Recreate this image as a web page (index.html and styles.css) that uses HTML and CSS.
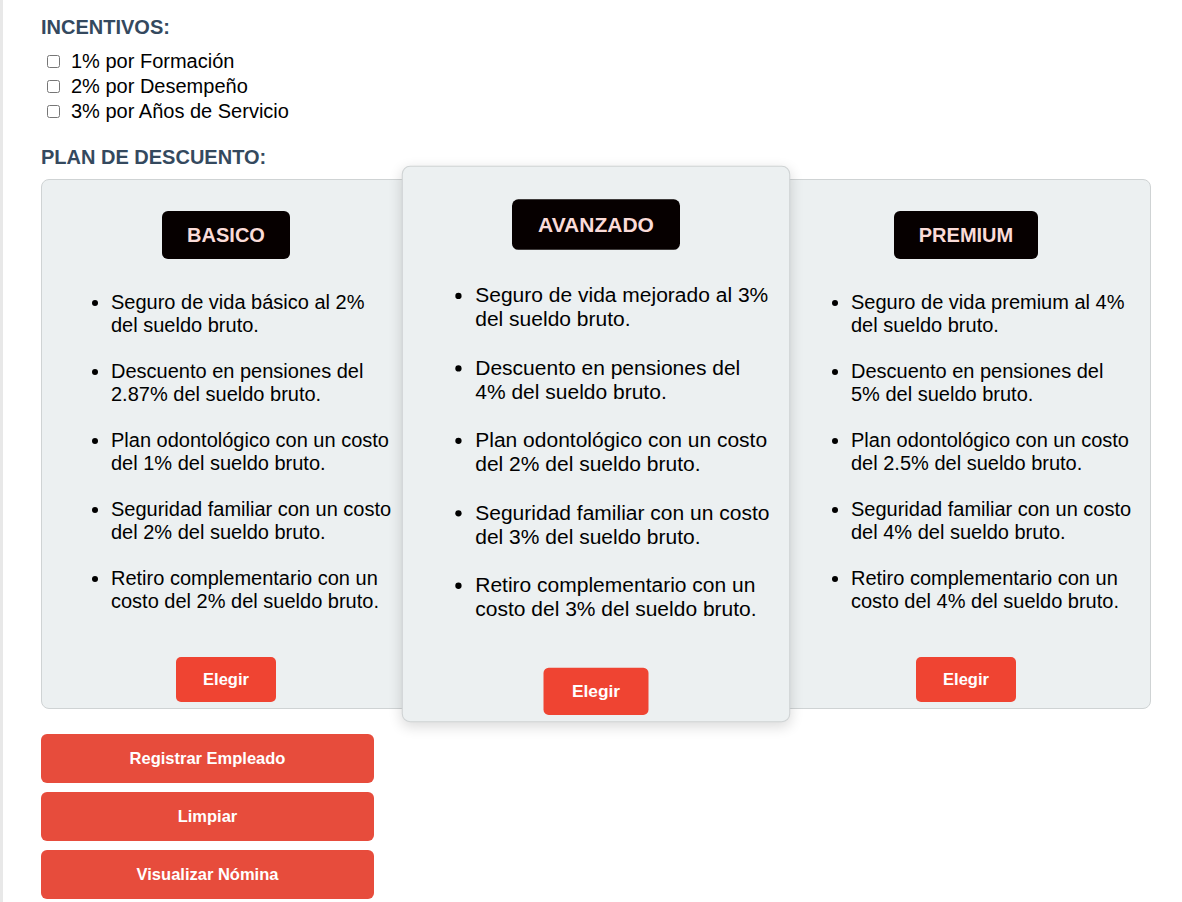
FILE: index.html
```html
<!DOCTYPE html>
<html lang="es">
<head>
<meta charset="utf-8">
<title>Plan de descuento</title>
<link rel="stylesheet" href="styles.css">
</head>
<body>
<div class="page">
  <h2 class="section-title">INCENTIVOS:</h2>
  <div class="incentives">
    <label class="check"><input type="checkbox"> 1% por Formación</label>
    <label class="check"><input type="checkbox"> 2% por Desempeño</label>
    <label class="check"><input type="checkbox"> 3% por Años de Servicio</label>
  </div>

  <h2 class="section-title">PLAN DE DESCUENTO:</h2>
  <div class="plans">
    <div class="card">
      <h3 class="badge">BASICO</h3>
      <ul class="features">
        <li>Seguro de vida básico al 2% del sueldo bruto.</li>
        <li>Descuento en pensiones del 2.87% del sueldo bruto.</li>
        <li>Plan odontológico con un costo del 1% del sueldo bruto.</li>
        <li>Seguridad familiar con un costo del 2% del sueldo bruto.</li>
        <li>Retiro complementario con un costo del 2% del sueldo bruto.</li>
      </ul>
      <button class="choose">Elegir</button>
    </div>
    <div class="card featured">
      <h3 class="badge">AVANZADO</h3>
      <ul class="features">
        <li>Seguro de vida mejorado al 3% del sueldo bruto.</li>
        <li>Descuento en pensiones del 4% del sueldo bruto.</li>
        <li>Plan odontológico con un costo del 2% del sueldo bruto.</li>
        <li>Seguridad familiar con un costo del 3% del sueldo bruto.</li>
        <li>Retiro complementario con un costo del 3% del sueldo bruto.</li>
      </ul>
      <button class="choose">Elegir</button>
    </div>
    <div class="card">
      <h3 class="badge">PREMIUM</h3>
      <ul class="features">
        <li>Seguro de vida premium al 4% del sueldo bruto.</li>
        <li>Descuento en pensiones del 5% del sueldo bruto.</li>
        <li>Plan odontológico con un costo del 2.5% del sueldo bruto.</li>
        <li>Seguridad familiar con un costo del 4% del sueldo bruto.</li>
        <li>Retiro complementario con un costo del 4% del sueldo bruto.</li>
      </ul>
      <button class="choose">Elegir</button>
    </div>
  </div>

  <div class="actions">
    <button class="action">Registrar Empleado</button>
    <button class="action">Limpiar</button>
    <button class="action">Visualizar Nómina</button>
  </div>
</div>
</body>
</html>
```

FILE: styles.css
```css
html, body {
  margin: 0;
  padding: 0;
  background: #ffffff;
}

body {
  font-family: "Liberation Sans", Arial, sans-serif;
  color: #000;
}

.page {
  border-left: 3px solid #e8e8e8;
  min-height: 902px;
  box-sizing: border-box;
  padding: 16px 31px 0 38px;
}

.section-title {
  margin: 0;
  font-size: 20px;
  line-height: 23px;
  font-weight: bold;
  color: #34495e;
}

.incentives {
  margin: 10px 0 22px;
}

.check {
  display: flex;
  align-items: center;
  height: 25px;
  font-size: 20px;
  line-height: 23px;
}

.check input {
  margin: 0 11px 0 6px;
  width: 13px;
  height: 13px;
}

.plans {
  display: flex;
  width: 1110px;
  margin-top: 10px;
}

.card {
  flex: 1 1 0;
  box-sizing: border-box;
  height: 530px;
  background: #ecf0f1;
  border: 1px solid #cfd3d4;
  border-radius: 8px;
  padding: 0 16px 6px;
  display: flex;
  flex-direction: column;
  align-items: center;
}

.card.featured {
  transform: scale(1.05);
  z-index: 1;
  box-shadow: 0 4px 12px rgba(0, 0, 0, 0.14);
}

.badge {
  margin: 31px 0 0;
  padding: 12px 25px;
  background: #060000;
  color: #fadbd8;
  font-size: 20px;
  line-height: 24px;
  font-weight: bold;
  border-radius: 6px;
}

.features {
  align-self: stretch;
  margin: 32px 0 0;
  padding-left: 53px;
  font-size: 20px;
  line-height: 23px;
}

.features li {
  margin-bottom: 23px;
}

.features li:last-child {
  margin-bottom: 0;
}

.choose {
  margin-top: auto;
  border: none;
  background: #ef4432;
  color: #fff;
  font-family: "Liberation Sans", Arial, sans-serif;
  font-size: 16.5px;
  font-weight: bold;
  line-height: 19px;
  padding: 13px 27px;
  border-radius: 5px;
}

.actions {
  margin-top: 25px;
  width: 333px;
  display: flex;
  flex-direction: column;
  gap: 9px;
}

.action {
  border: none;
  background: #e74c3c;
  color: #fff;
  font-family: "Liberation Sans", Arial, sans-serif;
  font-size: 16.5px;
  font-weight: bold;
  line-height: 19px;
  padding: 15px 10px;
  border-radius: 6px;
}
```
